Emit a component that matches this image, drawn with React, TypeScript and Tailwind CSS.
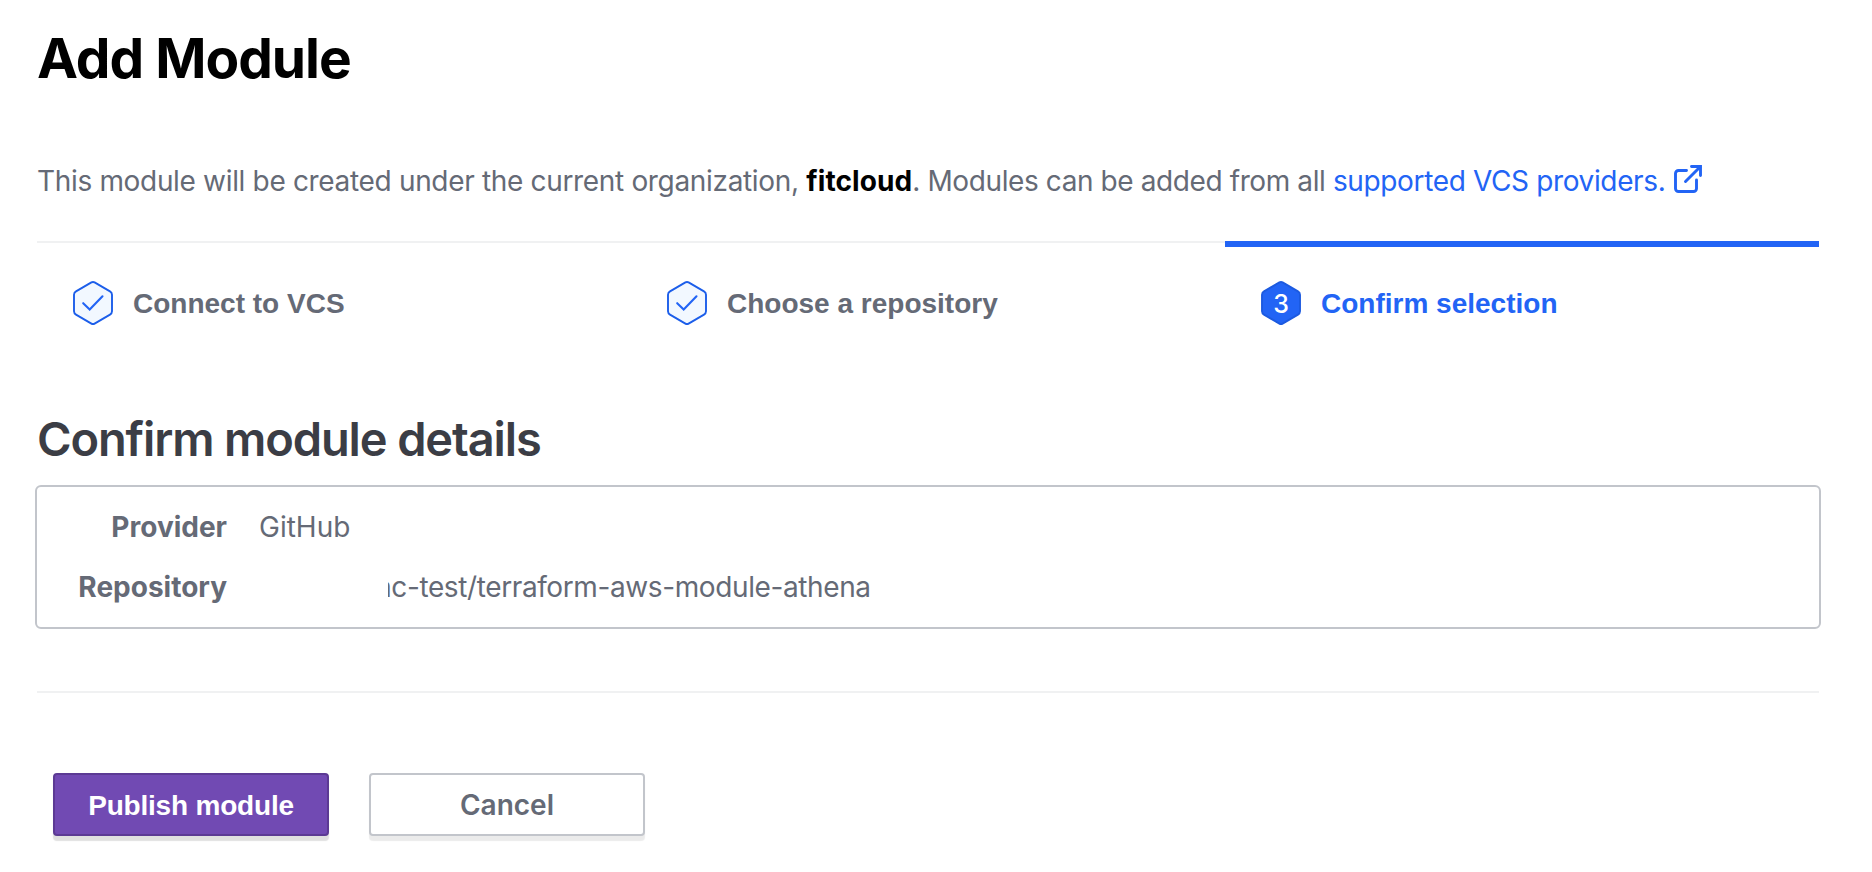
import type { ReactNode } from "react";

function Hexagon({ active = false }: { active?: boolean }) {
  return (
    <svg width="44" height="48" viewBox="0 0 44 48" className="block shrink-0">
      <path
        d="M20.4 3.4a3.2 3.2 0 0 1 3.2 0l15.4 9a4 4 0 0 1 2 3.4v16.4a4 4 0 0 1-2 3.4l-15.4 9a3.2 3.2 0 0 1-3.2 0l-15.4-9a4 4 0 0 1-2-3.4V15.8a4 4 0 0 1 2-3.4Z"
        fill={active ? "#2264f5" : "#f2f8ff"}
        stroke={active ? "#1c5ae0" : "#1c5eea"}
        strokeWidth="1.9"
      />
      {!active && (
        <path d="M12.2 24.2l6.5 6.3 12.800-13.200" fill="none" stroke="#2264f5" strokeWidth="2.100" strokeLinecap="round" />
      )}
      {active && (
        <text x="22" y="33.500" textAnchor="middle" fill="#ffffff" className="font-['Inter',sans-serif] text-[25px] font-medium">
          3
        </text>
      )}
    </svg>
  );
}

function Step({ label, active = false }: { label: string; active?: boolean }) {
  return (
    <li
      className={
        active
          ? "h-[124px] flex-1 border-t-[6px] border-[#2264f5] pt-8 text-[#2264f5]"
          : "h-[124px] flex-1 border-t-2 border-[#f0f1f2] pt-9 text-[#656a76]"
      }
    >
      <div className="flex h-[48px] items-center gap-[18px] pl-[34px]">
        <Hexagon active={active} />
        <span className="pt-0.5 font-['Liberation_Sans',sans-serif] text-[28px] leading-[48px] font-bold">{label}</span>
      </div>
    </li>
  );
}

function DetailRow({ label, children }: { label: string; children: ReactNode }) {
  return (
    <div className="flex h-[60px] items-center leading-[60px]">
      <dt className="w-[190px] text-right font-bold">{label}</dt>
      <dd className="pl-8">{children}</dd>
    </div>
  );
}

function ExternalIcon() {
  return (
    <svg width="30" height="30" viewBox="0 0 30 30" fill="none" stroke="#2264f5" strokeWidth="2.9" className="mt-[3px] ml-2 block">
      <path d="M13.500 6.500H5.500a3 3 0 0 0-3 3v15a3 3 0 0 0 3 3h15a3 3 0 0 0 3-3v-8.500" strokeLinecap="round" />
      <path d="M12.500 17.500 27 3" strokeLinecap="round" />
      <path d="M18.500 2.500h9V11.500" strokeLinecap="round" />
    </svg>
  );
}

export default function App() {
  return (
    <main className="h-[872px] w-[1872px] overflow-hidden bg-white pt-6 pr-[53px] pl-[37px] font-['Inter',sans-serif] text-[28px] text-[#656a76]">
      <h1 className="text-[55px] leading-[68px] font-bold tracking-[-1px] text-black">Add Module</h1>

      <p className="mt-[69px] flex h-10 leading-10 whitespace-pre">
        <span className="tracking-[-0.33px]">This module will be created under the current organization, </span>
        <strong className="font-bold tracking-[0.1px] text-black">fitcloud</strong>
        <span className="tracking-[-0.4px]">. Modules can be added from all </span>
        <a href="#" className="flex text-[#2264f5]">
          <span className="tracking-[-0.36px]">supported VCS providers.</span>
          <ExternalIcon />
        </a>
      </p>

      <ol className="mt-10 flex">
        <Step label="Connect to VCS" />
        <Step label="Choose a repository" />
        <Step label="Confirm selection" active />
      </ol>

      <h2 className="mt-11 text-[47px] leading-[60px] font-semibold tracking-[-1.13px] text-[#3b3d45]">
        Confirm module details
      </h2>

      <dl className="-mx-[2px] mt-4 rounded-[6px] border-2 border-[#c2c5cb] py-[10px]">
        <DetailRow label="Provider">GitHub</DetailRow>
        <DetailRow label="Repository">
          <span className="ml-[129px] flex w-[490px] overflow-hidden tracking-[-0.39px]">
            <span className="-ml-3">ac-test/terraform-aws-module-athena</span>
          </span>
        </DetailRow>
      </dl>

      <hr className="mt-[62px] border-t-2 border-[#f0f1f2]" />

      <div className="mt-20 flex gap-10 pl-4">
        <button className="h-[63px] w-[276px] rounded-[4px] border-2 border-[#5c3a94] bg-[#714ab3] pt-[3px] font-['Liberation_Sans',sans-serif] font-bold tracking-[-0.2px] text-white shadow-[0_5px_1px_rgba(0,0,0,0.12)]">
          Publish module
        </button>
        <button className="h-[63px] w-[276px] rounded-[4px] border-2 border-[#c2c5cb] bg-white font-semibold shadow-[0_5px_1px_rgba(0,0,0,0.08)]">
          Cancel
        </button>
      </div>
    </main>
  );
}
